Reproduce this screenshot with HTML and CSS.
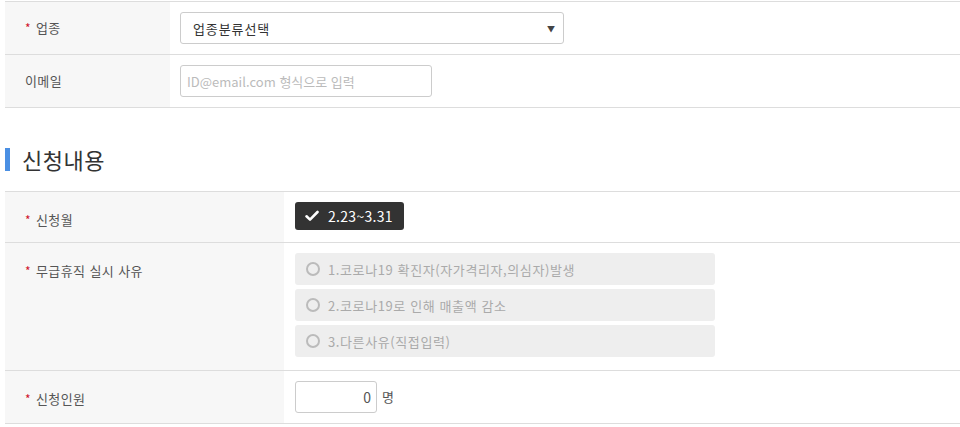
FILE: index.html
```html
<!DOCTYPE html>
<html lang="ko">
<head>
<meta charset="utf-8">
<link rel="stylesheet" href="styles.css">
</head>
<body>
<div class="page">
  <div class="form form-top">
    <div class="row">
      <div class="label label-mid"><span class="req">*</span>업종</div>
      <div class="field field-mid">
        <div class="select"><span class="select-text">업종분류선택</span><span class="arrow">▼</span></div>
      </div>
    </div>
    <div class="row">
      <div class="label label-mid">이메일</div>
      <div class="field field-mid">
        <div class="input email">ID@email.com 형식으로 입력</div>
      </div>
    </div>
  </div>

  <h2 class="section-title"><span class="bar"></span>신청내용</h2>

  <div class="form form-apply">
    <div class="row">
      <div class="label label-top"><span class="req">*</span>신청월</div>
      <div class="field field-top">
        <span class="badge">
          <svg class="check" viewBox="0 0 14 12" width="14" height="12"><path d="M1.5 6.3 L5 9.6 L12.5 2" fill="none" stroke="#fff" stroke-width="2.6" stroke-linecap="round" stroke-linejoin="round"/></svg>
          2.23~3.31
        </span>
      </div>
    </div>
    <div class="row">
      <div class="label label-top"><span class="req">*</span>무급휴직 실시 사유</div>
      <div class="field field-top field-radios">
        <div class="radio"><span class="circle"></span>1.코로나19 확진자(자가격리자,의심자)발생</div>
        <div class="radio"><span class="circle"></span>2.코로나19로 인해 매출액 감소</div>
        <div class="radio"><span class="circle"></span>3.다른사유(직접입력)</div>
      </div>
    </div>
    <div class="row">
      <div class="label label-top"><span class="req">*</span>신청인원</div>
      <div class="field field-top field-count">
        <div class="input number">0</div><span class="unit">명</span>
      </div>
    </div>
  </div>
</div>
</body>
</html>
```

FILE: styles.css
```css
* { box-sizing: border-box; }
html, body { margin: 0; padding: 0; background: #fff; }
body {
  font-family: "Noto Sans CJK KR", "Noto Sans", sans-serif;
  font-size: 13px;
  color: #555;
  overflow: hidden;
}
.page { padding: 1px 0 0 5px; }

.form { border-top: 1px solid #ddd; }
.row { display: flex; border-bottom: 1px solid #ddd; }
.form-top .label { width: 165px; }
.form-apply .label { width: 279px; }

.label {
  background: #f7f7f7;
  color: #555;
  line-height: 16px;
  padding-left: 20px;
  display: flex;
  align-items: flex-start;
  letter-spacing: 0.4px;
}
.label-mid { align-items: center; min-height: 52px; }
.label-top { padding-top: 20px; padding-bottom: 14px; }
.req { color: #d0142c; font-size: 12px; margin-right: 5px; width: 6px; letter-spacing: 0; }

.field { flex: 1; padding-left: 10px; display: flex; }
.form-apply .field { padding-left: 11px; }
.field-mid { align-items: center; }
.field-top { padding-top: 10px; padding-right: 10px; }

.select {
  width: 384px;
  height: 32px;
  border: 1px solid #ccc;
  border-radius: 3px;
  display: flex;
  align-items: center;
  justify-content: space-between;
  padding: 0 8px 0 12px;
  color: #333;
  background: #fff;
}
.select-text { letter-spacing: 0.9px; }
.arrow { font-size: 8px; color: #444; }

.input {
  height: 32px;
  border: 1px solid #ccc;
  border-radius: 3px;
  background: #fff;
  display: flex;
  align-items: center;
}
.email { width: 252px; padding-left: 6px; color: #bbb; }

.section-title {
  margin: 39px 0 20px 0;
  font-size: 22px;
  font-weight: 400;
  color: #333;
  line-height: 24px;
  display: flex;
  align-items: center;
  letter-spacing: 0.5px;
}
.bar {
  width: 5px;
  height: 23px;
  background: #4a8fe3;
  margin-right: 12px;
}

.badge {
  display: inline-flex;
  align-items: center;
  height: 28px;
  padding: 0 11px 0 10px;
  background: #333;
  color: #fff;
  border-radius: 3px;
  font-size: 14px;
  letter-spacing: 0.3px;
}
.check { margin-right: 9px; }

.field-radios { flex-direction: column; padding-bottom: 13px; }
.radio {
  width: 420px;
  height: 32px;
  background: #eee;
  border-radius: 3px;
  display: flex;
  align-items: center;
  padding-left: 11px;
  color: #aaa;
  margin-bottom: 4px;
  letter-spacing: 0.6px;
}
.radio:last-child { margin-bottom: 0; }
.circle {
  width: 14px;
  height: 14px;
  border: 2px solid #bbb;
  border-radius: 50%;
  margin-right: 8px;
  background: #eee;
}

.field-count { align-items: flex-start; padding-bottom: 10px; }
.number { width: 82px; justify-content: flex-end; padding-right: 5px; color: #555; font-size: 14px; }
.unit { margin-left: 5px; line-height: 32px; color: #555; }
```
